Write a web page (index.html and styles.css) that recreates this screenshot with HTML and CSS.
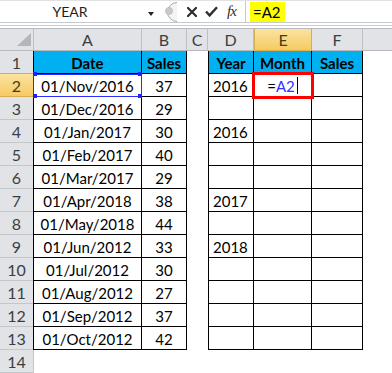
FILE: index.html
```html
<!DOCTYPE html>
<html lang="en">
<head>
    <meta charset="UTF-8">
    <title>YEAR formula</title>
    <link rel="stylesheet" href="styles.css">
</head>
<body>
<div class="fbar">
    <div class="namebox">
        <span class="name">YEAR</span>
        <span class="drop"></span>
    </div>
    <svg class="grip" width="18" height="22" viewBox="0 0 18 22">
        <path d="M17 1.5 A9.5 9.5 0 0 0 17 20.5" fill="#f4f4f4" stroke="#a9a9a9" stroke-width="1"/>
        <circle cx="9" cy="10" r="3.6" fill="#c9c9c9" stroke="#b3b3b3" stroke-width="0.6"/>
    </svg>
    <div class="btns">
        <svg class="ico-x" width="10" height="10" viewBox="0 0 10 10">
            <path d="M1 1 L9 9 M9 1 L1 9" stroke="#2e2e2e" stroke-width="2.2" stroke-linecap="square"/>
        </svg>
        <svg class="ico-ok" width="13" height="11" viewBox="0 0 13 11">
            <path d="M1 5.5 L4.6 9.4 L12 1.2" fill="none" stroke="#2e2e2e" stroke-width="2.4"/>
        </svg>
        <span class="fx">fx</span>
    </div>
    <div class="formula"><span class="hl">=A2</span></div>
</div>
<div class="strip"></div>

<div class="sheet">
    <div class="corner"><span class="tri"></span></div>
    <div class="ch ch-a">A</div>
    <div class="ch">B</div>
    <div class="ch">C</div>
    <div class="ch">D</div>
    <div class="ch ch-sel">E</div>
    <div class="ch">F</div>
    <div class="ch ch-end"></div>

    <div class="rh">1</div>
    <div class="c ca th">Date</div>
    <div class="c cb th">Sales</div>
    <div class="c"></div>
    <div class="c cd th">Year</div>
    <div class="c ce th">Month</div>
    <div class="c cf th">Sales</div>
    <div class="c"></div>

    <div class="rh rh-sel">2</div>
    <div class="c ca ref">01/Nov/2016</div>
    <div class="c cb">37</div>
    <div class="c"></div>
    <div class="c cd yr">2016</div>
    <div class="c ce edit"><span class="eq">=</span><span class="refa">A2</span><span class="caret"></span></div>
    <div class="c cf"></div>
    <div class="c"></div>

    <div class="rh">3</div>
    <div class="c ca">01/Dec/2016</div>
    <div class="c cb">29</div>
    <div class="c"></div>
    <div class="c cd yr"></div>
    <div class="c ce"></div>
    <div class="c cf"></div>
    <div class="c"></div>

    <div class="rh">4</div>
    <div class="c ca">01/Jan/2017</div>
    <div class="c cb">30</div>
    <div class="c"></div>
    <div class="c cd yr">2016</div>
    <div class="c ce"></div>
    <div class="c cf"></div>
    <div class="c"></div>

    <div class="rh">5</div>
    <div class="c ca">01/Feb/2017</div>
    <div class="c cb">40</div>
    <div class="c"></div>
    <div class="c cd yr"></div>
    <div class="c ce"></div>
    <div class="c cf"></div>
    <div class="c"></div>

    <div class="rh">6</div>
    <div class="c ca">01/Mar/2017</div>
    <div class="c cb">29</div>
    <div class="c"></div>
    <div class="c cd yr"></div>
    <div class="c ce"></div>
    <div class="c cf"></div>
    <div class="c"></div>

    <div class="rh">7</div>
    <div class="c ca">01/Apr/2018</div>
    <div class="c cb">38</div>
    <div class="c"></div>
    <div class="c cd yr">2017</div>
    <div class="c ce"></div>
    <div class="c cf"></div>
    <div class="c"></div>

    <div class="rh">8</div>
    <div class="c ca">01/May/2018</div>
    <div class="c cb">44</div>
    <div class="c"></div>
    <div class="c cd yr"></div>
    <div class="c ce"></div>
    <div class="c cf"></div>
    <div class="c"></div>

    <div class="rh">9</div>
    <div class="c ca">01/Jun/2012</div>
    <div class="c cb">33</div>
    <div class="c"></div>
    <div class="c cd yr">2018</div>
    <div class="c ce"></div>
    <div class="c cf"></div>
    <div class="c"></div>

    <div class="rh">10</div>
    <div class="c ca">01/Jul/2012</div>
    <div class="c cb">30</div>
    <div class="c"></div>
    <div class="c cd yr"></div>
    <div class="c ce"></div>
    <div class="c cf"></div>
    <div class="c"></div>

    <div class="rh">11</div>
    <div class="c ca">01/Aug/2012</div>
    <div class="c cb">27</div>
    <div class="c"></div>
    <div class="c cd yr"></div>
    <div class="c ce"></div>
    <div class="c cf"></div>
    <div class="c"></div>

    <div class="rh">12</div>
    <div class="c ca">01/Sep/2012</div>
    <div class="c cb">37</div>
    <div class="c"></div>
    <div class="c cd yr"></div>
    <div class="c ce"></div>
    <div class="c cf"></div>
    <div class="c"></div>

    <div class="rh">13</div>
    <div class="c ca">01/Oct/2012</div>
    <div class="c cb">42</div>
    <div class="c"></div>
    <div class="c cd yr"></div>
    <div class="c ce"></div>
    <div class="c cf"></div>
    <div class="c"></div>

    <div class="rh">14</div>
    <div class="c ca-empty"></div>
    <div class="c"></div>
    <div class="c"></div>
    <div class="c"></div>
    <div class="c"></div>
    <div class="c"></div>
    <div class="c"></div>
</div>
</body>
</html>
```

FILE: styles.css
```css
body {
    margin: 0;
    width: 392px;
    height: 373px;
    overflow: hidden;
    background: #fff;
    font-family: Lato, "Open Sans", sans-serif;
    color: #000;
}

/* formula bar */
.fbar {
    display: flex;
    height: 23px;
    box-sizing: border-box;
    border-top: 1px solid #e2e2e2;
    border-bottom: 1px solid #c6c9cd;
    background: #fff;
}
.namebox {
    position: relative;
    width: 160px;
    display: flex;
    align-items: center;
}
.name {
    width: 140px;
    text-align: center;
    font-size: 14px;
    color: #1d1d1d;
}
.drop {
    position: absolute;
    left: 148px;
    top: 11px;
    width: 0;
    height: 0;
    border-left: 3.5px solid transparent;
    border-right: 3.5px solid transparent;
    border-top: 4px solid #222;
}
.btns {
    width: 67px;
    display: flex;
    align-items: center;
}
.ico-x {
    margin-left: 9px;
}
.ico-ok {
    margin-left: 8px;
}
.fx {
    margin-left: 9px;
    font-family: "Liberation Serif", serif;
    font-style: italic;
    font-size: 15px;
    color: #2e2e2e;
    letter-spacing: -1px;
}
.formula {
    flex: 1;
    border-left: 1px solid #c6c9cd;
    padding-left: 4px;
    display: flex;
    align-items: stretch;
    padding-top: 1px;
}
.hl {
    background: #ffff00;
    padding: 0 4px 0 3px;
    font-size: 15px;
    line-height: 21px;
}
.strip {
    height: 3px;
    box-sizing: border-box;
    border-bottom: 1px solid #c9ccd0;
    margin-bottom: 2px;
}

/* grid */
.sheet {
    display: grid;
    grid-template-columns: 33px 109px 45px 21px 46px 58px 51px 29px;
    grid-auto-rows: 23px;
}
.sheet > div {
    box-sizing: border-box;
    display: flex;
    align-items: center;
    justify-content: center;
    font-size: 15px;
    line-height: 20px;
    padding-top: 1px;
}

.corner,
.ch {
    background: #e1e3e7;
    border-top: 1px solid #b7bbc0;
    border-bottom: 1px solid #b7bbc0;
    border-right: 1px solid #bcc0c5;
    color: #3b3f44;
    font-size: 16px !important;
}
.corner {
    position: relative;
    border-right: none;
}
.tri {
    position: absolute;
    right: 2px;
    bottom: 4px;
    width: 0;
    height: 0;
    border-left: 14px solid transparent;
    border-bottom: 13px solid #b3b7bc;
}
.ch-a {
    border-left: 1px solid #bcc0c5;
}
.ch-sel {
    background: linear-gradient(#fbe3a0, #f6ca62);
    border-left: 1px solid #d7ad52;
    border-right: 1px solid #d7ad52;
    border-bottom-color: #e2b24a;
    color: #4a3a1a;
}
.ch-end {
    border-right: none;
}

.rh {
    background: #e1e3e7;
    border-bottom: 1px solid #c3c6cb;
    color: #3b3f44;
    font-size: 16px !important;
}
.rh-sel {
    background: linear-gradient(#fbe3a0, #f6ca62);
    border-top: 1px solid #d7ad52;
    border-bottom-color: #d7ad52 !important;
    margin-top: -1px;
    color: #4a3a1a;
}

.ca,
.cb,
.cd,
.ce,
.cf {
    border-right: 1px solid #000;
    border-bottom: 1px solid #000;
}
.ca,
.cd {
    border-left: 1px solid #000;
}
.ca-empty {
    border-left: 1px solid #c3c6cb;
}
.th {
    background: #00b0f0;
    font-weight: 700;
}
.yr {
    justify-content: flex-start !important;
    padding-left: 4px;
}

/* reference highlight on A2 */
.ref {
    position: relative;
    outline: 1px solid #2b2bff;
    outline-offset: -1px;
}
.ref::after {
    content: "";
    position: absolute;
    inset: -2px -1px -2px -1px;
    background:
        linear-gradient(#2020ff, #2020ff) left top / 4px 4px no-repeat,
        linear-gradient(#2020ff, #2020ff) right top / 4px 4px no-repeat,
        linear-gradient(#2020ff, #2020ff) left bottom / 4px 4px no-repeat,
        linear-gradient(#2020ff, #2020ff) right bottom / 4px 4px no-repeat;
}

/* E2 being edited */
.edit {
    outline: 3px solid #ff0000;
    outline-offset: -1px;
    position: relative;
    z-index: 1;
}
.refa {
    color: #3333ff;
}
.caret {
    width: 1px;
    height: 17px;
    background: #000;
    margin-left: 2px;
}
```
